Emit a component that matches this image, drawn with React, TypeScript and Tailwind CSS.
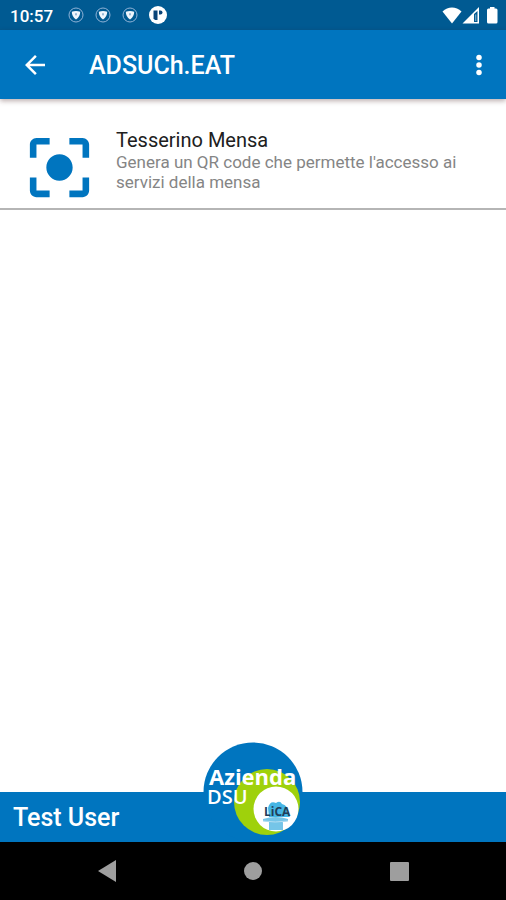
import React from "react";

function ShieldBadge() {
  return (
    <svg viewBox="0 0 16 16" className="size-4" aria-hidden="true">
      <circle cx="8" cy="8" r="7" fill="none" stroke="#8fb2d6" strokeWidth="1" />
      <path d="M3.800 4.800Q8 3 12.200 4.800 12.200 9.500 8 12.600 3.800 9.500 3.800 4.800Z" fill="#eef5fc" />
      <path d="M7 6.500h2L8 9Z" fill="#5b8fbd" />
    </svg>
  );
}

function ParkingBadge() {
  return (
    <svg viewBox="0 0 18 18" className="size-[18px]" aria-hidden="true">
      <circle cx="9" cy="9" r="9" fill="#fff" />
      <path d="M4.500 4.500h4v9.500h-2.500l-1.500-1.500Z" fill="#0a4478" />
      <path d="M10 4.500h1.500a2 2 0 0 1 0 4H10Z" fill="#0a4478" />
    </svg>
  );
}

function StatusBar() {
  return (
    <div className="flex h-[30px] items-center justify-between bg-[#005a92] pr-2 pl-[10px]">
      <div className="flex items-center gap-[11px]">
        <span className="mr-1 pt-[2px] text-[17px] leading-6 font-medium">10:57</span>
        <ShieldBadge />
        <ShieldBadge />
        <ShieldBadge />
        <ParkingBadge />
      </div>
      <svg viewBox="0 0 56 18" className="h-[18px] w-14" fill="#fff" aria-hidden="true">
        <path d="M.5 5.500C6 .2 14 .2 19.500 5.500L10 17.500Z" />
        <path fillRule="evenodd" d="M37 1v16.500H20.500ZM32 8v8h3.500V5Z" />
        <path d="M33.300 8.500h.9V15h-.9Z" opacity=".6" />
        <path d="M48 1h4.500v1.500H54q1.500 0 1.500 1.500v12q0 1.500-1.500 1.500h-7.500q-1.500 0-1.500-1.500V4q0-1.500 1.500-1.500H48Z" />
      </svg>
    </div>
  );
}

function AppBar() {
  return (
    <header className="z-10 flex h-[69px] items-center bg-[#0075bf] pr-[11px] pl-[19px] shadow-[0_2px_5px_rgba(60,20,20,0.35)]">
      <button type="button" aria-label="Indietro" className="flex size-8 items-center justify-center">
        <svg viewBox="0 0 24 24" className="size-[30px]" fill="#fff" aria-hidden="true">
          <path d="M20 11H7.830l5.590-5.590L12 4l-8 8 8 8 1.410-1.410L7.830 13H20v-2z" />
        </svg>
      </button>
      <h1 className="ml-[38px] flex-1 pt-[2px] text-[25px] leading-8 font-medium">ADSUCh.EAT</h1>
      <button type="button" aria-label="Altre opzioni" className="flex size-8 items-center justify-center">
        <svg viewBox="0 0 24 24" className="size-[30px]" fill="#fff" aria-hidden="true">
          <circle cx="12" cy="6" r="2.200" />
          <circle cx="12" cy="12" r="2.200" />
          <circle cx="12" cy="18" r="2.200" />
        </svg>
      </button>
    </header>
  );
}

function MenuItem() {
  return (
    <button type="button" className="flex w-full items-center gap-[17px] border-b-2 border-[#b5b5b5] pt-[29px] pr-5 pb-[1px] pl-5 text-left">
      <svg viewBox="0 0 24 24" className="size-[79px] shrink-0" fill="#0075bf" aria-hidden="true">
        <path d="M12 8c-2.210 0-4 1.790-4 4s1.790 4 4 4 4-1.790 4-4-1.790-4-4-4zm-7 7H3v4c0 1.100.9 2 2 2h4v-2H5v-4zM5 5h4V3H5c-1.100 0-2 .9-2 2v4h2V5zm14-2h-4v2h4v4h2V5c0-1.100-.9-2-2-2zm0 16h-4v2h4c1.100 0 2-.9 2-2v-4h-2v4z" />
      </svg>
      <span className="flex flex-1 flex-col pb-[15px]">
        <span className="text-xl leading-6 text-[#202020]">Tesserino Mensa</span>
        <span className="text-[17px] leading-5 text-[#858585]">
          Genera un QR code che permette l'accesso ai servizi della mensa
        </span>
      </span>
    </button>
  );
}

function Logo() {
  return (
    <svg
      viewBox="0 0 100 100"
      role="img"
      aria-label="Azienda DSU"
      className="absolute bottom-0 left-1/2 size-[100px] -translate-x-1/2 font-['Open_Sans',sans-serif]"
    >
      <circle cx="50" cy="50" r="49.500" fill="#0075bf" />
      <circle cx="64" cy="60" r="33" fill="#9fd10b" />
      <circle cx="73" cy="67" r="22.500" fill="#fff" />
      <path d="M65 66q2-8 8-5 4-3 6 1 6 1 5 8l3 5H66Z" fill="#45b5e4" />
      <path d="M60 77q13-4 25 0v2q-12 3-25 0ZM66 80h14v8H66Z" fill="#75c5e8" />
      <path d="M60 79q12 2 25 0" stroke="#b5def2" fill="none" />
      <text x="61" y="74" fontSize="12" fontWeight="700" fill="#203e59">LiCA</text>
      <text x="6" y="43" fontSize="22" fontWeight="700" fill="#fff">Azienda</text>
      <text x="4" y="62" fontSize="20" fontWeight="600" fill="#fff">DSU</text>
    </svg>
  );
}

function SystemNav() {
  return (
    <nav aria-label="Navigazione di sistema" className="flex h-[58px] items-center justify-center gap-[98px] bg-black">
      <button type="button" aria-label="Indietro" className="flex size-12 items-center justify-center">
        <svg viewBox="0 0 18 22" className="h-[22px] w-[18px]" fill="#9e9e9e" aria-hidden="true">
          <path d="M0 11 18 0v22Z" />
        </svg>
      </button>
      <button type="button" aria-label="Home" className="flex size-12 items-center justify-center">
        <span className="size-[18px] rounded-full bg-[#9e9e9e]" />
      </button>
      <button type="button" aria-label="App recenti" className="flex size-12 items-center justify-center">
        <span className="size-[19px] rounded-[1px] bg-[#9e9e9e]" />
      </button>
    </nav>
  );
}

export default function App() {
  return (
    <div className="flex min-h-screen flex-col bg-white font-[Roboto,sans-serif] text-white">
      <StatusBar />
      <AppBar />
      <main className="flex-1">
        <MenuItem />
      </main>
      <footer className="relative flex h-[50px] items-center bg-[#0075bf] px-[13px]">
        <span className="pt-[2px] text-[25px] leading-8 font-medium">Test User</span>
        <Logo />
      </footer>
      <SystemNav />
    </div>
  );
}
